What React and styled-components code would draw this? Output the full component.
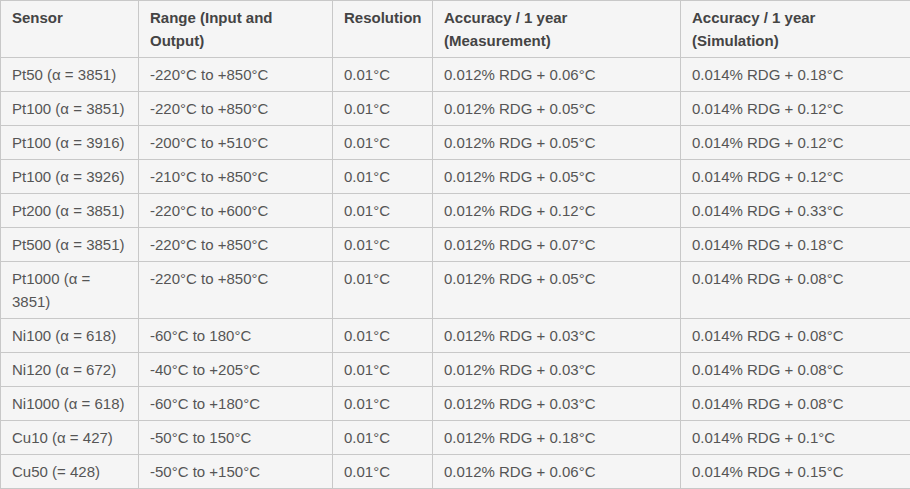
import styled, { createGlobalStyle } from "styled-components";

const GlobalStyle = createGlobalStyle`
  html, body {
    margin: 0;
    padding: 0;
    background: #ffffff;
  }
`;

const Table = styled.table`
  width: 910px;
  border-collapse: collapse;
  table-layout: fixed;
  font-family: "Liberation Sans", Arial, sans-serif;
  font-size: 15px;
  line-height: 23px;
  color: #555555;
  background-color: #f5f5f5;
`;

const Head = styled.th`
  text-align: left;
  vertical-align: top;
  font-weight: bold;
  color: #444444;
  padding: 5px 10px 5px 11px;
  border: 1px solid #c8c8c8;
`;

const Cell = styled.td`
  vertical-align: top;
  padding: 5px 10px 5px 11px;
  border: 1px solid #c8c8c8;
`;

const columns = [
  { title: "Sensor", width: 138 },
  { title: "Range (Input and Output)", width: 194 },
  { title: "Resolution", width: 100 },
  { title: "Accuracy / 1 year (Measurement)", width: 248 },
  { title: "Accuracy / 1 year (Simulation)", width: 230 },
];

const rows = [
  ["Pt50 (α = 3851)", "-220°C to +850°C", "0.01°C", "0.012% RDG + 0.06°C", "0.014% RDG + 0.18°C"],
  ["Pt100 (α = 3851)", "-220°C to +850°C", "0.01°C", "0.012% RDG + 0.05°C", "0.014% RDG + 0.12°C"],
  ["Pt100 (α = 3916)", "-200°C to +510°C", "0.01°C", "0.012% RDG + 0.05°C", "0.014% RDG + 0.12°C"],
  ["Pt100 (α = 3926)", "-210°C to +850°C", "0.01°C", "0.012% RDG + 0.05°C", "0.014% RDG + 0.12°C"],
  ["Pt200 (α = 3851)", "-220°C to +600°C", "0.01°C", "0.012% RDG + 0.12°C", "0.014% RDG + 0.33°C"],
  ["Pt500 (α = 3851)", "-220°C to +850°C", "0.01°C", "0.012% RDG + 0.07°C", "0.014% RDG + 0.18°C"],
  ["Pt1000 (α = 3851)", "-220°C to +850°C", "0.01°C", "0.012% RDG + 0.05°C", "0.014% RDG + 0.08°C"],
  ["Ni100 (α = 618)", "-60°C to 180°C", "0.01°C", "0.012% RDG + 0.03°C", "0.014% RDG + 0.08°C"],
  ["Ni120 (α = 672)", "-40°C to +205°C", "0.01°C", "0.012% RDG + 0.03°C", "0.014% RDG + 0.08°C"],
  ["Ni1000 (α = 618)", "-60°C to +180°C", "0.01°C", "0.012% RDG + 0.03°C", "0.014% RDG + 0.08°C"],
  ["Cu10 (α = 427)", "-50°C to 150°C", "0.01°C", "0.012% RDG + 0.18°C", "0.014% RDG + 0.1°C"],
  ["Cu50 (= 428)", "-50°C to +150°C", "0.01°C", "0.012% RDG + 0.06°C", "0.014% RDG + 0.15°C"],
];

const App = () => {
  return (
    <>
      <GlobalStyle />
      <Table>
        <colgroup>
          {columns.map((col) => (
            <col key={col.title} style={{ width: col.width }} />
          ))}
        </colgroup>
        <thead>
          <tr>
            {columns.map((col) => (
              <Head key={col.title}>{col.title}</Head>
            ))}
          </tr>
        </thead>
        <tbody>
          {rows.map((row, index) => (
            <tr key={index}>
              {row.map((value, i) => (
                <Cell key={i}>{value}</Cell>
              ))}
            </tr>
          ))}
        </tbody>
      </Table>
    </>
  );
};

export default App;
